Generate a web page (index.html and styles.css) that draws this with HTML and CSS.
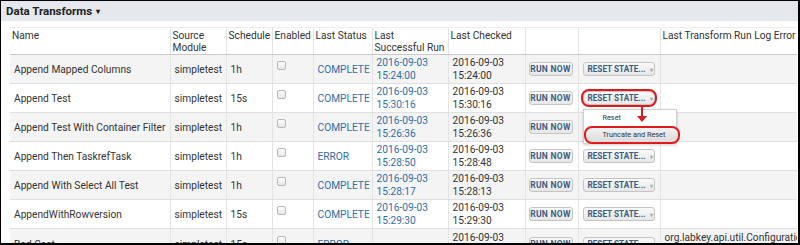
FILE: index.html
```html
<!DOCTYPE html>
<html lang="en">
<head>
    <meta charset="UTF-8">
    <title>Data Transforms</title>
    <link rel="stylesheet" href="styles.css">
</head>
<body>
    <div class="frame">
        <div class="panel-title">Data Transforms <span class="caret">&#9662;</span></div>
        <div class="panel-body">
            <table class="grid">
                <colgroup>
                    <col style="width:160px">
                    <col style="width:56px">
                    <col style="width:46px">
                    <col style="width:41px">
                    <col style="width:59px">
                    <col style="width:76px">
                    <col style="width:77px">
                    <col style="width:53px">
                    <col style="width:82px">
                    <col style="width:137px">
                </colgroup>
                <thead>
                    <tr>
                        <th>Name</th>
                        <th>Source Module</th>
                        <th>Schedule</th>
                        <th>Enabled</th>
                        <th>Last Status</th>
                        <th>Last Successful Run</th>
                        <th>Last Checked</th>
                        <th></th>
                        <th></th>
                        <th>Last Transform Run Log Error</th>
                    </tr>
                </thead>
                <tbody>
                    <tr>
                        <td>Append Mapped Columns</td>
                        <td>simpletest</td>
                        <td>1h</td>
                        <td><span class="check"></span></td>
                        <td><a>COMPLETE</a></td>
                        <td><a>2016-09-03<br>15:24:00</a></td>
                        <td>2016-09-03<br>15:24:00</td>
                        <td><span class="btn btn-run">Run Now</span></td>
                        <td><span class="btn btn-reset">Reset State... <span class="arrow">&#9662;</span></span></td>
                        <td></td>
                    </tr>
                    <tr>
                        <td>Append Test</td>
                        <td>simpletest</td>
                        <td>15s</td>
                        <td><span class="check"></span></td>
                        <td><a>COMPLETE</a></td>
                        <td><a>2016-09-03<br>15:30:16</a></td>
                        <td>2016-09-03<br>15:30:16</td>
                        <td><span class="btn btn-run">Run Now</span></td>
                        <td>
                            <div class="menu-anchor">
                                <span class="btn btn-reset btn-marked">Reset State... <span class="arrow">&#9662;</span></span>
                                <div class="menu">
                                    <div class="menu-item">Reset</div>
                                    <div class="menu-item menu-active">Truncate and Reset</div>
                                </div>
                                <div class="pointer"></div>
                            </div>
                        </td>
                        <td></td>
                    </tr>
                    <tr>
                        <td>Append Test With Container Filter</td>
                        <td>simpletest</td>
                        <td>1h</td>
                        <td><span class="check"></span></td>
                        <td><a>COMPLETE</a></td>
                        <td><a>2016-09-03<br>15:26:36</a></td>
                        <td>2016-09-03<br>15:26:36</td>
                        <td><span class="btn btn-run">Run Now</span></td>
                        <td></td>
                        <td></td>
                    </tr>
                    <tr>
                        <td>Append Then TaskrefTask</td>
                        <td>simpletest</td>
                        <td>1h</td>
                        <td><span class="check"></span></td>
                        <td><a>ERROR</a></td>
                        <td><a>2016-09-03<br>15:28:50</a></td>
                        <td>2016-09-03<br>15:28:48</td>
                        <td><span class="btn btn-run">Run Now</span></td>
                        <td><span class="btn btn-reset">Reset State... <span class="arrow">&#9662;</span></span></td>
                        <td></td>
                    </tr>
                    <tr>
                        <td>Append With Select All Test</td>
                        <td>simpletest</td>
                        <td>1h</td>
                        <td><span class="check"></span></td>
                        <td><a>COMPLETE</a></td>
                        <td><a>2016-09-03<br>15:28:17</a></td>
                        <td>2016-09-03<br>15:28:13</td>
                        <td><span class="btn btn-run">Run Now</span></td>
                        <td><span class="btn btn-reset">Reset State... <span class="arrow">&#9662;</span></span></td>
                        <td></td>
                    </tr>
                    <tr>
                        <td>AppendWithRowversion</td>
                        <td>simpletest</td>
                        <td>15s</td>
                        <td><span class="check"></span></td>
                        <td><a>COMPLETE</a></td>
                        <td><a>2016-09-03<br>15:29:30</a></td>
                        <td>2016-09-03<br>15:29:30</td>
                        <td><span class="btn btn-run">Run Now</span></td>
                        <td><span class="btn btn-reset">Reset State... <span class="arrow">&#9662;</span></span></td>
                        <td></td>
                    </tr>
                    <tr>
                        <td>Bad Cast</td>
                        <td>simpletest</td>
                        <td>15s</td>
                        <td><span class="check"></span></td>
                        <td><a>ERROR</a></td>
                        <td></td>
                        <td>2016-09-03<br>15:29:30</td>
                        <td><span class="btn btn-run">Run Now</span></td>
                        <td><span class="btn btn-reset">Reset State... <span class="arrow">&#9662;</span></span></td>
                        <td class="clip">org.labkey.api.util.ConfigurationException</td>
                    </tr>
                </tbody>
            </table>
        </div>
    </div>
</body>
</html>
```

FILE: styles.css
```css
body, html {
    margin: 0;
    padding: 0;
    background-color: #fff;
    font-family: Roboto, 'Liberation Sans', sans-serif;
}
.frame {
    box-sizing: border-box;
    width: 800px;
    height: 245px;
    border-top: 1px solid #000;
    border-left: 1px solid #000;
    border-right: 2px solid #000;
    border-bottom: 2px solid #000;
    overflow: hidden;
}
.panel-title {
    height: 20px;
    line-height: 20px;
    padding-left: 5px;
    background-color: #e4e7eb;
    color: #222;
    font-size: 11.5px;
    font-weight: bold;
}
.caret {
    font-size: 8px;
    margin-left: 1px;
    vertical-align: 1px;
}
.panel-body {
    padding: 6px 0 0 9px;
}
.grid {
    table-layout: fixed;
    width: 787px;
    border-collapse: collapse;
    font-size: 10.2px;
    color: #333;
}
.grid th {
    height: 24px;
    padding: 2px 3px 0 2px;
    text-align: left;
    vertical-align: top;
    font-weight: normal;
    line-height: 12px;
    border-top: 1px solid #eee;
    border-left: 1px solid #e4e4e4;
    border-bottom: 1px solid #c8c8c8;
    white-space: nowrap;
}
.grid th:nth-child(2),
.grid th:nth-child(6) {
    white-space: normal;
}
.grid td {
    height: 28px;
    padding: 0 3px 0 4px;
    line-height: 13px;
    vertical-align: middle;
    border-left: 1px solid #e4e4e4;
    border-bottom: 1px solid #e0e0e0;
    white-space: nowrap;
}
.grid th:first-child,
.grid td:first-child {
    border-left: none;
}
.grid tbody tr:nth-child(odd) {
    background-color: #f4f4f4;
}
.grid a {
    color: #2f6ea8;
}
.clip {
    overflow: hidden;
    vertical-align: top !important;
    padding-top: 2px !important;
}
.check {
    display: inline-block;
    width: 7px;
    height: 7px;
    border: 1px solid #b8b8b8;
    border-radius: 2px;
    background: linear-gradient(#fdfdfd, #e6e6e6);
    margin-left: 0;
    position: relative;
    top: -3px;
}
.btn {
    display: inline-block;
    box-sizing: border-box;
    height: 14px;
    line-height: 12px;
    padding: 0 4px;
    border: 1px solid #c4c4c4;
    border-radius: 3px;
    background: linear-gradient(#fafafa, #e6e6e6);
    color: #3a5e82;
    font-size: 8.5px;
    font-weight: bold;
    text-transform: uppercase;
    letter-spacing: 0.3px;
    vertical-align: middle;
    white-space: nowrap;
}
.btn-run {
    width: 44px;
    text-align: center;
    padding: 0;
    margin-left: -1px;
}
.btn-reset {
    width: 72px;
    padding: 0 0 0 4px;
    font-size: 8.2px;
    letter-spacing: 0;
}
.arrow {
    color: #aaa;
    font-size: 6px;
    margin-left: 2px;
}
.menu-anchor {
    position: relative;
}
.btn-marked {
    outline: 2px solid #e0191b;
    outline-offset: 0px;
    border-radius: 6px;
}
.menu {
    position: absolute;
    left: 0;
    top: 18px;
    width: 92px;
    background-color: #fff;
    border: 1px solid #d0d0d0;
    box-shadow: 0 1px 3px rgba(0,0,0,0.2);
    z-index: 2;
    font-size: 7.3px;
    color: #333;
}
.menu-item {
    height: 16px;
    line-height: 16px;
    padding-left: 19px;
}
.menu-active {
    background: linear-gradient(#f2f2f2, #dcdcdc);
    border: 2px solid #e0191b;
    border-radius: 8px;
    margin: 0 -4px -1px 0;
    padding-left: 17px;
    height: 14px;
    line-height: 14px;
}
.pointer {
    position: absolute;
    left: 58px;
    top: 15px;
    width: 2px;
    height: 11px;
    background-color: #e0191b;
    z-index: 3;
}
.pointer::after {
    content: '';
    position: absolute;
    left: -4px;
    top: 10px;
    border-left: 5px solid transparent;
    border-right: 5px solid transparent;
    border-top: 6px solid #e0191b;
}
```
